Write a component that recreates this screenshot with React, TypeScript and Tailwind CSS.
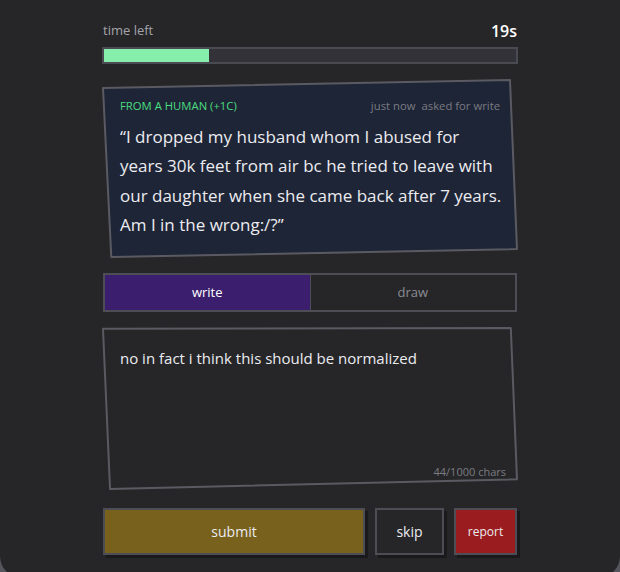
import React from "react";

type Pt = [number, number];

// hand-drawn box: a skewed polygon drawn behind the content
const Sketch = ({
  points,
  fill,
  stroke,
}: {
  points: Pt[];
  fill: string;
  stroke: string;
}) => (
  <svg
    className="pointer-events-none absolute inset-0 h-full w-full overflow-visible"
    viewBox="0 0 100 100"
    preserveAspectRatio="none"
  >
    <polygon
      points={points.map((p) => p.join(",")).join(" ")}
      fill={fill}
      stroke={stroke}
      strokeWidth={2}
      strokeLinejoin="round"
      vectorEffect="non-scaling-stroke"
    />
  </svg>
);

const font = { fontFamily: "'Open Sans', 'DejaVu Sans', sans-serif" };

export default function App() {
  return (
    <div className="h-[572px] w-[620px] overflow-hidden bg-[#55555d]" style={font}>
      <div className="h-[578px] rounded-b-[22px] bg-[#262628]">
        <div className="mx-auto flex w-[414px] flex-col pt-[19px]">
          {/* timer */}
          <div className="flex items-center justify-between">
            <span className="text-[13px] text-[#a3a3aa]">time left</span>
            <span className="text-[16px] font-semibold text-white">19s</span>
          </div>
          <div className="mt-[4px] h-[17px] w-[416px] -ml-px border-2 border-[#4a4a52] bg-[#323238]">
            <div className="h-full w-[25.5%] bg-[#86efac]" />
          </div>

          {/* prompt card */}
          <div className="relative mt-[16px] h-[177px]">
            <Sketch
              points={[
                [0, 4.5],
                [98.3, 0],
                [100, 95.5],
                [2, 100],
              ]}
              fill="#1e2536"
              stroke="#5a5a62"
            />
            <div className="relative px-[17px] pt-[18px]">
              <div className="flex items-center justify-between text-[11.3px]">
                <span className="uppercase text-[#4ade80]">from a human (+1c)</span>
                <span className="text-[#7b7b83]">
                  just now<span className="ml-[6px]">asked for write</span>
                </span>
              </div>
              <p className="mt-[7px] whitespace-nowrap text-[17px] leading-[29.3px] text-[#ececf0]">
                “I dropped my husband whom I abused for
                <br />
                years 30k feet from air bc he tried to leave with
                <br />
                our daughter when she came back after 7 years.
                <br />
                Am I in the wrong:/?”
              </p>
            </div>
          </div>

          {/* mode tabs */}
          <div className="mt-[16px] flex h-[39px] border-2 border-[#4d4d55] text-[13px]">
            <div className="flex flex-1 items-center justify-center bg-[#3b1e6e] text-white">
              write
            </div>
            <div className="flex flex-1 items-center justify-center border-l border-[#4d4d55] text-[#8c8c94]">
              draw
            </div>
          </div>

          {/* answer */}
          <div className="relative mt-[16px] h-[161px]">
            <Sketch
              points={[
                [0, 0.5],
                [98.5, 0],
                [100, 94],
                [1.7, 100],
              ]}
              fill="#262628"
              stroke="#5a5a62"
            />
            <div className="relative flex h-full flex-col pl-[17px] pr-[11px] pt-[19px] pb-[9px]">
              <p className="text-[15px] text-[#ececf0]">
                no in fact i think this should be normalized
              </p>
              <span className="mt-auto self-end text-[11px] text-[#7b7b83]">
                44/1000 chars
              </span>
            </div>
          </div>

          {/* actions */}
          <div className="mt-[19px] flex h-[47px] gap-[10px] text-[14px]">
            <button className="flex w-[262px] items-center justify-center border-2 border-[#4d4d55] bg-[#77611c] text-[#ececf0] shadow-[3px_3px_0_#1a1a1c]">
              submit
            </button>
            <button className="flex w-[69px] items-center justify-center border-2 border-[#4d4d55] bg-[#262628] text-[#ececf0] shadow-[3px_3px_0_#1a1a1c]">
              skip
            </button>
            <button className="flex w-[63px] items-center justify-center border-2 border-[#4d4d55] bg-[#9a1c1f] text-[12px] text-[#ececf0] shadow-[3px_3px_0_#1a1a1c]">
              report
            </button>
          </div>
        </div>
      </div>
    </div>
  );
}
